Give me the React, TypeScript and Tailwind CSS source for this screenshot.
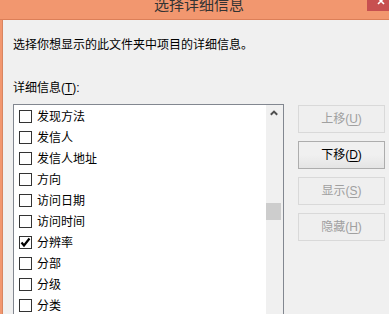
import { Fragment } from "react";

const FONT = { fontFamily: '"Liberation Sans", "Noto Sans CJK SC", sans-serif' };

type Item = { label: string; checked?: boolean };

const items: Item[] = [
  { label: "发现方法" },
  { label: "发信人" },
  { label: "发信人地址" },
  { label: "方向" },
  { label: "访问日期" },
  { label: "访问时间" },
  { label: "分辨率", checked: true },
  { label: "分部" },
  { label: "分级" },
  { label: "分类" },
];

function Mnemonic({ text, hotkey }: { text: string; hotkey: string }) {
  return (
    <Fragment>
      {text}(<span className="underline underline-offset-2">{hotkey}</span>)
    </Fragment>
  );
}

function CheckRow({ item }: { item: Item }) {
  return (
    <div className="h-[21px] flex items-center pl-[5px] gap-[5px] shrink-0">
      <div className="w-[13px] h-[13px] border border-[#333333] bg-white flex items-center justify-center">
        {item.checked && (
          <svg width="11" height="11" viewBox="0 0 11 11">
            <path d="M1.5 5.5 L4 8.5 L9.5 1.5" fill="none" stroke="#000" strokeWidth="2.2" />
          </svg>
        )}
      </div>
      <span className="text-[12px] leading-[16px] text-black whitespace-nowrap">{item.label}</span>
    </div>
  );
}

function DialogButton({ text, hotkey, disabled }: { text: string; hotkey: string; disabled?: boolean }) {
  return (
    <button
      className={`h-[28px] w-[87px] flex items-center justify-center text-[12px] leading-[16px] border ${
        disabled
          ? "border-[#D9D9D9] bg-[#EFEFEF] text-[#A0A0A0]"
          : "border-[#ADADAD] bg-gradient-to-b from-[#F0F0F0] from-50% to-[#E4E4E4] text-black"
      }`}
    >
      <Mnemonic text={text} hotkey={hotkey} />
    </button>
  );
}

export default function App() {
  return (
    <div className="w-[389px] h-[314px] overflow-hidden bg-[#F0F0F0] flex flex-col relative" style={FONT}>
      {/* title bar */}
      <div className="h-[20px] shrink-0 bg-[#F2976F] border-b border-[#DC7F58] flex justify-center overflow-hidden">
        <span className="text-[15px] leading-[15px] mt-[-3px] ml-[9px] text-[#333333]">选择详细信息</span>
      </div>
      <div className="absolute top-0 right-0 w-[22px] h-[11px] bg-[#C75050] flex justify-center">
        <svg width="8" height="8" viewBox="0 0 8 8" className="mt-[-3px] ml-[6px]">
          <path d="M1 1 L7 7 M7 1 L1 7" stroke="#fff" strokeWidth="1.6" />
        </svg>
      </div>

      {/* body */}
      <div className="flex-1 flex border-l-2 border-[#F2976F]">
        <div className="w-px bg-[#D98560]" />
        <div className="flex-1 flex flex-col pl-[10px] pt-[17px]">
          <div className="text-[12px] leading-[16px] text-black">选择你想显示的此文件夹中项目的详细信息。</div>
          <div className="text-[12px] leading-[16px] text-black mt-[27px]">
            <Mnemonic text="详细信息" hotkey="T" />:
          </div>
          <div className="flex mt-[8px] items-start">
            <div className="w-[271px] h-[220px] border border-[#828790] bg-white flex">
              <div className="flex-1 flex flex-col pt-[1px] overflow-hidden">
                {items.map((it) => (
                  <CheckRow key={it.label} item={it} />
                ))}
              </div>
              <div className="w-[17px] bg-[#F0F0F0] flex flex-col">
                <div className="h-[17px] flex items-center justify-center">
                  <svg width="8" height="6" viewBox="0 0 8 6" className="ml-[-2px] mt-[-2px]">
                    <path d="M0.8 4.8 L4 1.6 L7.2 4.8" fill="none" stroke="#505050" strokeWidth="2" />
                  </svg>
                </div>
                <div className="mt-[81px] w-[15px] h-[17px] bg-[#CDCDCD]" />
              </div>
            </div>
            <div className="flex flex-col gap-[8px] ml-[14px] mt-[1px]">
              <DialogButton text="上移" hotkey="U" disabled />
              <DialogButton text="下移" hotkey="D" />
              <DialogButton text="显示" hotkey="S" disabled />
              <DialogButton text="隐藏" hotkey="H" disabled />
            </div>
          </div>
        </div>
      </div>
    </div>
  );
}
